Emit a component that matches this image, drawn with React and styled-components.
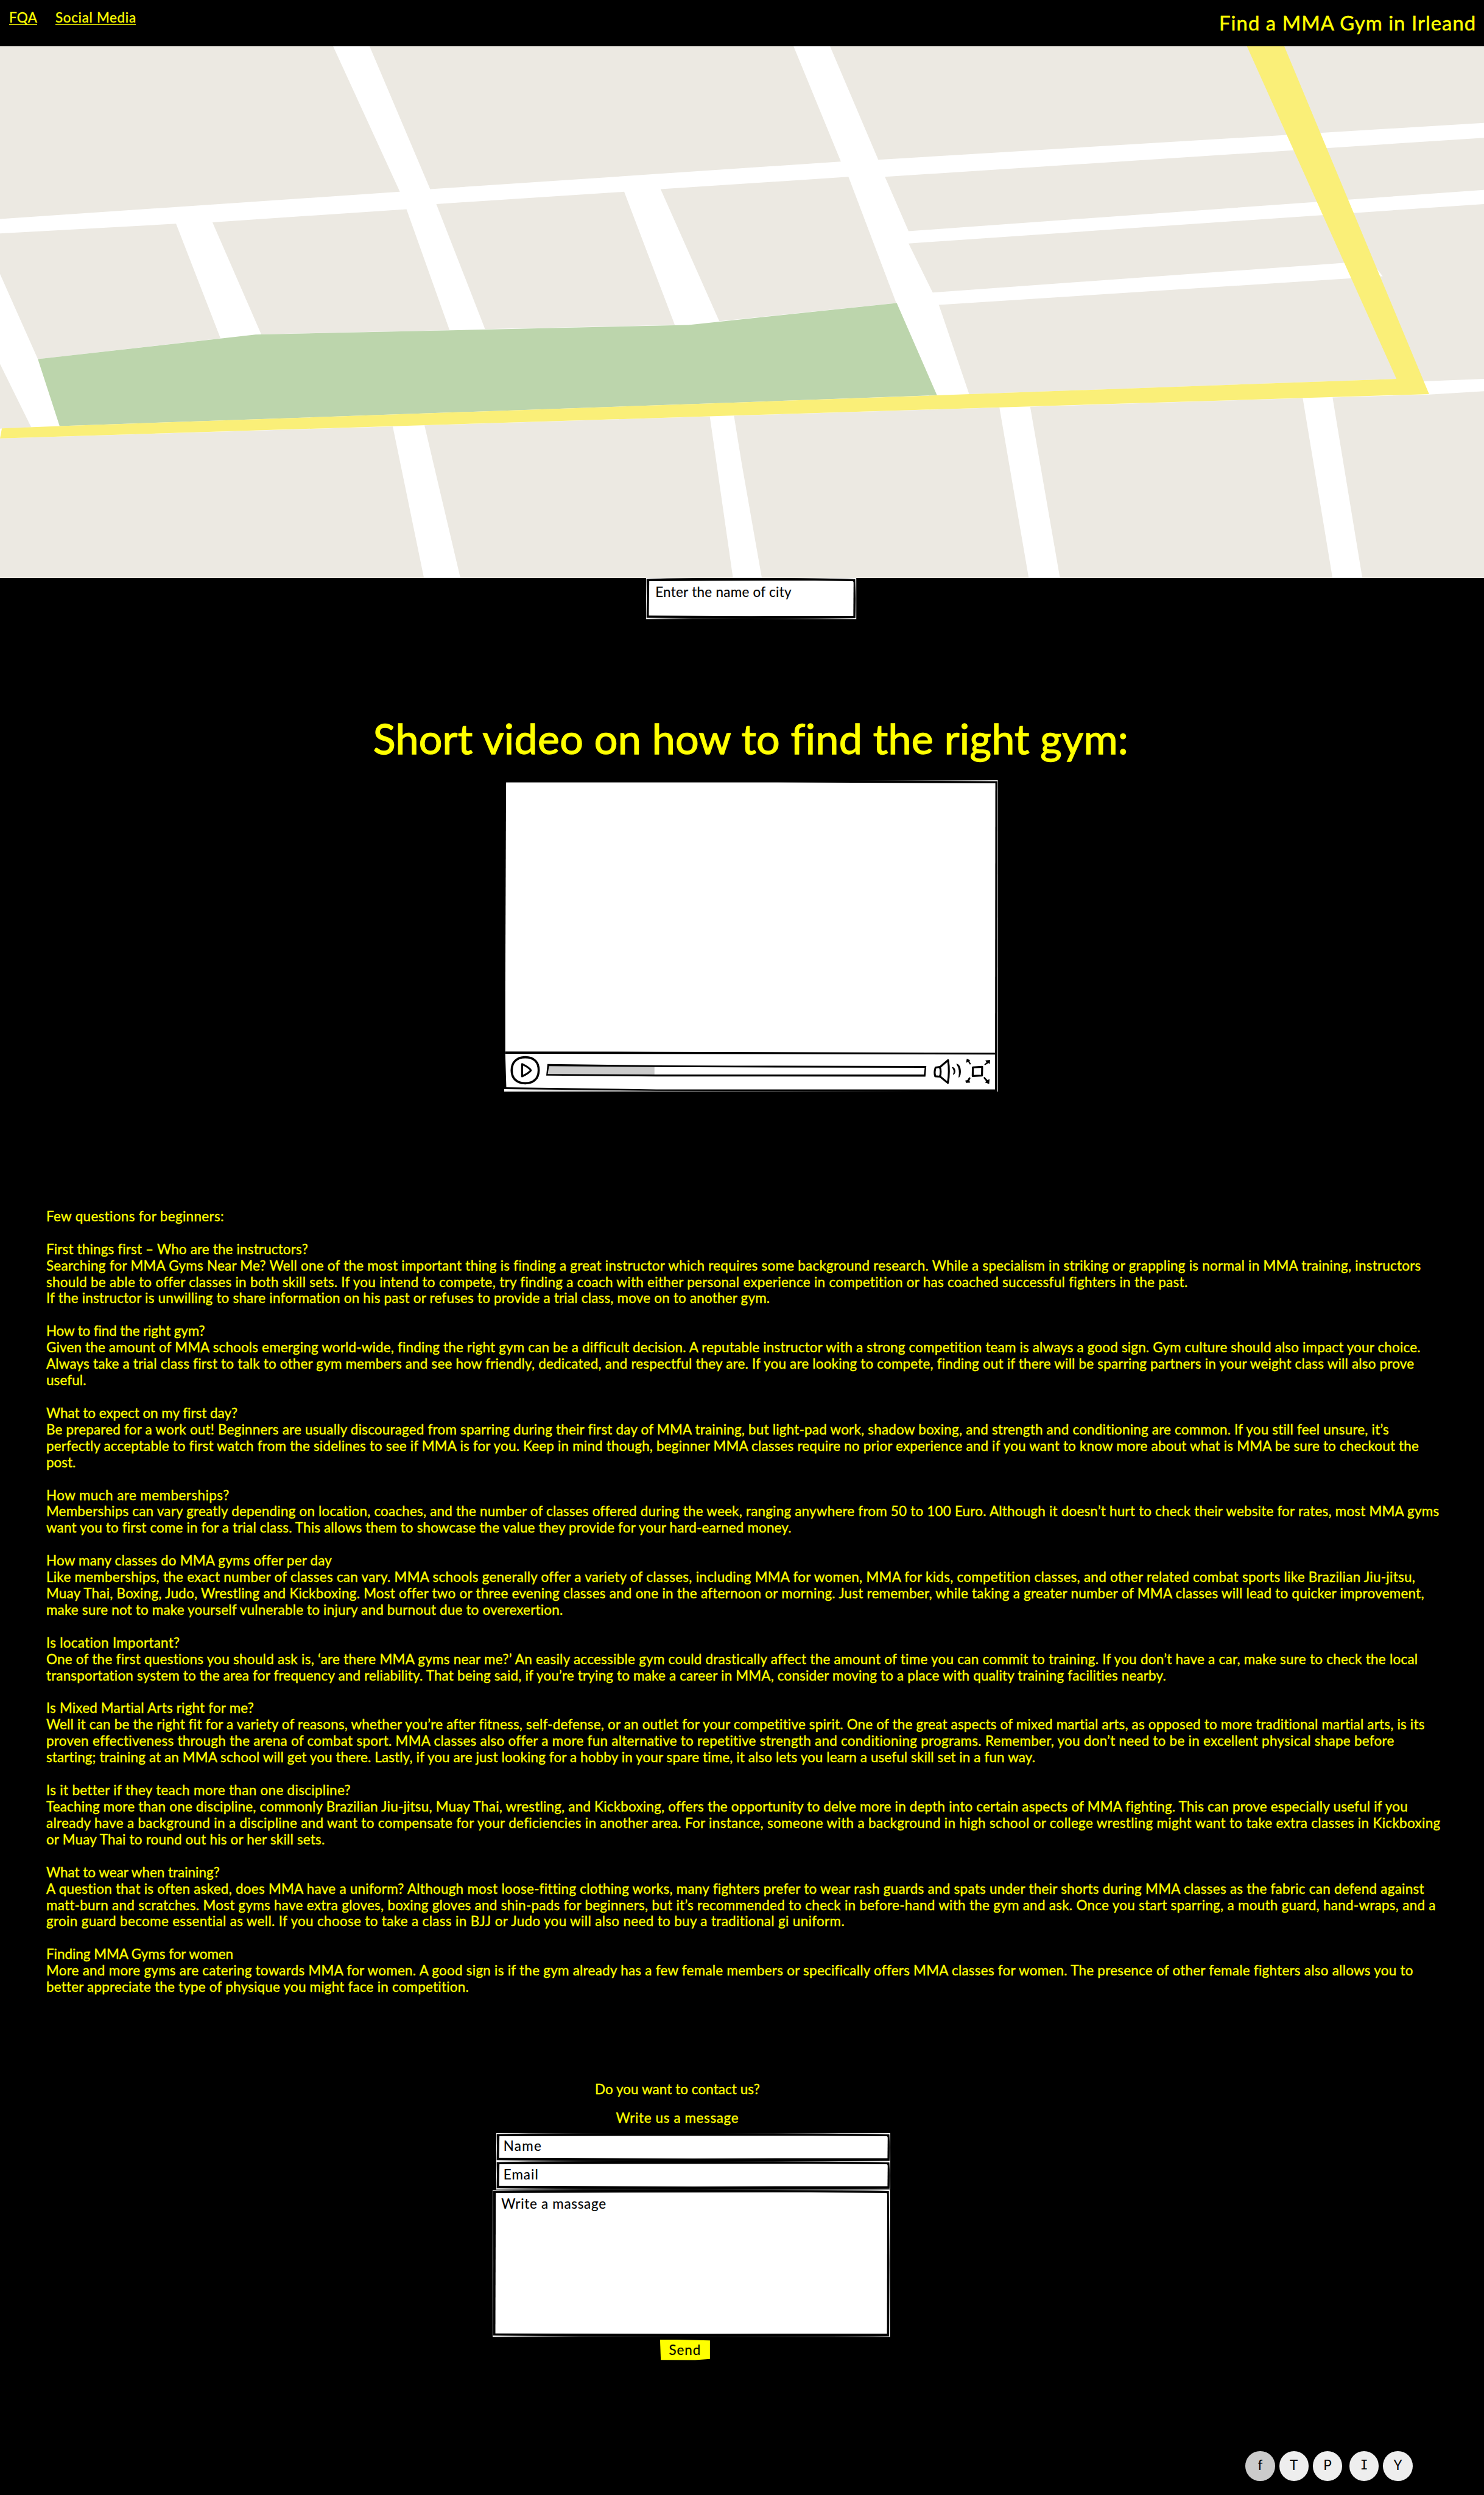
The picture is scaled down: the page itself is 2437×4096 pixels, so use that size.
import React, { useLayoutEffect, useRef } from "react";
import styled, { createGlobalStyle } from "styled-components";

/* Every size below is written in design units and scaled to the page. */
const SCALE = 0.863;
const u = (n) => `${+(n * SCALE).toFixed(3)}px`;

const YELLOW = "#ffff00";
const SANS = `Lato, "Open Sans", "Liberation Sans", sans-serif`;

const GlobalStyle = createGlobalStyle`
  *, *::before, *::after { box-sizing: border-box; }
  html, body { margin: 0; padding: 0; background: #000; }
  body { overflow: hidden; }
`;

const Page = styled.div`
  display: flex;
  flex-direction: column;
  align-items: flex-start;
  width: 2437px;
  height: 4096px;
  overflow: hidden;
  background: #000;
  color: ${YELLOW};
  font-family: ${SANS};
  font-size: ${u(26)};
  line-height: ${u(31.2)};
`;

const Fitted = styled.span`
  display: block;
  width: ${(p) => u(p.$width)};
  white-space: pre;
  -webkit-text-stroke: ${(p) => u(p.$stroke)} currentColor;
`;

/* A single line whose tracking is adjusted until it spans the given measure. */
function FitText({ width, stroke = 0.4, children, ...rest }) {
  const ref = useRef(null);
  useLayoutEffect(() => {
    const el = ref.current;
    el.style.letterSpacing = "0.001px";
    const range = document.createRange();
    range.selectNodeContents(el);
    const natural = range.getBoundingClientRect().width;
    const gaps = Math.max(1, el.textContent.length - 1);
    el.style.letterSpacing = `${(width * SCALE - natural) / gaps}px`;
  }, [width, children]);
  return (
    <Fitted ref={ref} $width={width} $stroke={stroke} {...rest}>
      {children}
    </Fitted>
  );
}

/* ---------- header ---------- */

const Header = styled.header`
  display: flex;
  justify-content: space-between;
  align-items: flex-start;
  width: 100%;
  height: ${u(88)};
  padding: ${u(18)} ${u(16)} 0 ${u(17.5)};
`;

const Nav = styled.nav`
  display: flex;
  gap: ${u(35)};
`;

const NavLink = styled.a`
  color: inherit;
  height: ${u(30)};
  border-bottom: ${u(2)} solid ${YELLOW};
`;

const Title = styled.h1`
  margin: ${u(1.5)} 0 0;
  font-size: ${u(38)};
  font-weight: 400;
  line-height: ${u(48)};
`;

/* ---------- map ---------- */

const MapView = styled.svg`
  display: block;
  width: 100%;
  height: ${u(1012)};
  background: #fff;
`;

const BLOCKS = [
  "0,124 704,124 845,515 0,588",
  "781,124 1677,124 1777,434 909,508",
  "1754,124 3136,124 3136,330 1856,429",
  "0,627 372,601 466,909 80,965 0,736",
  "0,978 66,1148 0,1152",
  "449,597 859,562 950,887 552,898",
  "922,548 1319,515 1426,873 1025,884",
  "1396,508 1793,475 1894,814 1520,863",
  "1870,475 3136,370 3136,510 1920,621",
  "1920,654 3136,548 3136,1018 3000,1025 2951,1018 2048,1059 1984,819 1971,786",
  "0,1178 830,1146 896,1554 0,1554",
  "897,1143 1500,1119 1549,1554 973,1554",
  "1551,1117 2112,1095 2174,1554 1610,1554 1568,1250",
  "2177,1093 2753,1070 2816,1554 2240,1554",
  "2816,1068 3020,1060 3136,1051 3136,1554 2879,1554",
];

function StreetMap() {
  return (
    <MapView viewBox="0 124 3136 1430" preserveAspectRatio="none">
      <g fill="#ece9e2">
        {BLOCKS.map((points) => (
          <polygon key={points} points={points} />
        ))}
      </g>
      <polygon
        fill="#fff"
        points="1960,787 1971,786 2841,706 2905,715 2922,742 2853,748 1984,819 1960,820"
      />
      <polygon
        fill="#bcd5ac"
        points="80,965 540,899 1455,873 1895,814 1980,1062 1568,1081 126,1145"
      />
      <polygon
        fill="#faef78"
        points="4,1151 126,1145 1568,1081 2951,1018 2635,124 2714,124 3020,1059 1568,1116 0,1178"
      />
    </MapView>
  );
}

/* ---------- hand drawn boxes ---------- */

const Box = styled.div`
  position: relative;
  width: ${(p) => u(p.$w)};
  height: ${(p) => u(p.$h)};
  margin-left: ${(p) => u(p.$left || 0)};
  padding: ${(p) => u(p.$padTop)} 0 0 ${(p) => u(p.$padLeft)};
  color: #000;
`;

const Backdrop = styled.svg`
  position: absolute;
  inset: 0;
  width: 100%;
  height: 100%;
`;

const Layer = styled.div`
  position: relative;
`;

function SketchBox({ id, w, h, left, padTop, padLeft, children }) {
  const outer = `M0.8,1.6 Q${w * 0.3},-0.4 ${w * 0.55},0 Q${w * 0.85},0.4 ${w - 2},2.2 L${w - 1},${h * 0.5} L${w - 1.6},${h - 1.4} Q${w * 0.7},${h - 0.2} ${w * 0.5},${h - 0.9} Q${w * 0.25},${h - 1.4} 0.8,${h - 2.8} L1.2,${h * 0.5} Z`;
  const inner = `M6,5.8 Q${w * 0.4},5 ${w * 0.8},5 L${w - 7},5.8 Q${w - 5.3},6 ${w - 5.2},8.6 L${w - 5.6},${h - 6.2} L${w * 0.5},${h - 6} L5.2,${h - 6.8} Z`;
  return (
    <Box $w={w} $h={h} $left={left} $padTop={padTop} $padLeft={padLeft}>
      <Backdrop viewBox={`0 0 ${w} ${h}`} preserveAspectRatio="none">
        <defs>
          <linearGradient id={id} x1="0" x2="1" y1="0" y2="0">
            <stop offset="0" stopColor="#fff" />
            <stop offset="0.22" stopColor="#333" />
            <stop offset="0.5" stopColor="#111" />
            <stop offset="0.72" stopColor="#777" />
            <stop offset="1" stopColor="#fff" />
          </linearGradient>
        </defs>
        <rect width={w} height={h} fill={`url(#${id})`} />
        <path d={outer} fill="#000" />
        <path d={inner} fill="#fff" />
      </Backdrop>
      <Layer>{children}</Layer>
    </Box>
  );
}

/* ---------- video ---------- */

const VideoHeading = styled.h2`
  margin: ${u(179.5)} 0 0 ${u(710)};
  font-size: ${u(79)};
  font-weight: 400;
  line-height: ${u(94)};
`;

const Player = styled.section`
  position: relative;
  display: flex;
  flex-direction: column;
  width: ${u(939)};
  height: ${u(592)};
  margin: ${u(32.5)} 0 0 ${u(960)};
`;

const Screen = styled.div`
  height: ${u(520)};
`;

const Controls = styled.div`
  position: relative;
  display: flex;
  align-items: center;
  height: ${u(64)};
  padding-left: ${u(10)};
`;

const Glyph = styled.svg`
  display: block;
  flex: none;
  width: ${(p) => u(p.$w)};
  height: ${(p) => u(p.$h)};
  margin-left: ${(p) => u(p.$gap || 0)};
  overflow: visible;
`;

function VideoPlayer() {
  return (
    <Player>
      <Backdrop viewBox="0 0 939 592" preserveAspectRatio="none">
        <defs>
          <linearGradient id="fadeOut" x1="0" x2="1" y1="0" y2="0">
            <stop offset="0" stopColor="#fff" />
            <stop offset="0.4" stopColor="#999" />
            <stop offset="1" stopColor="#000" />
          </linearGradient>
          <linearGradient id="fadeIn" x1="0" x2="1" y1="0" y2="0">
            <stop offset="0" stopColor="#000" />
            <stop offset="0.5" stopColor="#888" />
            <stop offset="1" stopColor="#fff" />
          </linearGradient>
        </defs>
        <polygon fill="#fff" points="3.6,4 520,4.2 934.6,5.6 934,588 290,588 4,584 2,520 2,400" />
        <polygon fill="url(#fadeOut)" points="0,587.6 290,590.6 780,591.2 780,592 0,592" />
        <polygon fill="url(#fadeIn)" points="640,0.5 939,0 939,1.6" />
        <polygon fill="#fff" points="938,0 939,0 939,592 937.5,592" />
        <polygon points="2,516 290,516.4 935,518.2 935,521.8 520,520.8 2,520.2" />
      </Backdrop>
      <Screen />
      <Controls>
        <Glyph $w={58} $h={56} viewBox="970 2008 58 56" fill="none" stroke="#000">
          <path
            strokeWidth="4.2"
            d="M999.5,2011 C1017,2011 1025.3,2021 1025.2,2036 C1025,2051 1016,2060.5 1000,2060.6 C983,2060.7 973.8,2051 973.8,2036 C973.8,2021 983,2011 999.5,2011 Z"
          />
          <path
            strokeWidth="3.6"
            strokeLinejoin="round"
            d="M993.6,2024 C1001,2027.5 1008,2031.5 1010.4,2036 C1007.5,2040.5 1001,2044 993.6,2047.4 Z"
          />
        </Glyph>
        <Glyph $w={724} $h={26} $gap={12} viewBox="1040 2023 724 26">
          <polygon fill="#fff" points="1044,2025 1762,2029 1760,2047 1042,2044" />
          <polygon fill="#cbcbcb" points="1044,2026 1246,2028 1246,2045 1042,2044" />
          <path
            fillRule="evenodd"
            d="M1042.3,2024 L1250,2026.5 L1400,2027 L1763.3,2027.6 L1761.6,2047.8 L1400,2047.6 L1250,2047.6 L1040,2046 Z M1045.4,2027.8 L1042.8,2043 L1250,2043.8 L1758.6,2044 L1760.2,2031 L1400,2030.3 L1250,2029.8 Z"
          />
        </Glyph>
        <Glyph $w={52} $h={56} $gap={12} viewBox="30 6 156 168" fill="none" stroke="#000" strokeLinecap="round" strokeLinejoin="round">
          <path strokeWidth="11" d="M66,72 L113,32 C119,70 119,120 112,162 L68,126" />
          <path strokeWidth="11" d="M42,74 L66,71 C72,85 73,112 66,126 L40,124 C34,106 36,90 42,74 Z" />
          <path fill="#000" strokeWidth="4" d="M137,73 C156,76 157,106 143,113 C150,98 149,86 137,73 Z" />
          <path fill="#000" strokeWidth="4" d="M163,54 C188,62 189,112 175,129 C179,106 178,76 163,54 Z" />
        </Glyph>
        <Glyph $w={48} $h={56} $gap={8.7} viewBox="212 6 144 168">
          <path fill="none" stroke="#000" strokeWidth="11" strokeLinejoin="round" d="M256,73 L309,70 L308,120 L255,122 Z" />
          <path d="M221,24 L240,31 L236,37 L245,54 L239,57 L229,42 L217,47 Z" />
          <path d="M354,30 L353,54 L345,49 L325,61 L321,56 L334,44 L327,34 Z" />
          <path d="M243,134 L236,149 L241,160 L216,162 L213,148 L224,146 L235,129 Z" />
          <path d="M322,127 L339,145 L351,141 L349,168 L326,160 L331,152 L316,133 Z" />
        </Glyph>
      </Controls>
    </Player>
  );
}

/* ---------- questions ---------- */

const Faq = styled.section`
  display: flex;
  flex-direction: column;
  gap: ${u(31.2)};
  margin: ${u(222.8)} 0 0 ${u(88)};
`;

const Question = styled.article`
  display: flex;
  flex-direction: column;
`;

const FAQ = [
  [["Few questions for beginners:", 426]],
  [
    ["First things first – Who are the instructors?", 586],
    ["Searching for MMA Gyms Near Me? Well one of the most important thing is finding a great instructor which requires some background research. While a specialism in striking or grappling is normal in MMA training, instructors", 2704],
    ["should be able to offer classes in both skill sets. If you intend to compete, try finding a coach with either personal experience in competition or has coached successful fighters in the past.", 2260],
    ["If the instructor is unwilling to share information on his past or refuses to provide a trial class, move on to another gym.", 1465],
  ],
  [
    ["How to find the right gym?", 390],
    ["Given the amount of MMA schools emerging world-wide, finding the right gym can be a difficult decision. A reputable instructor with a strong competition team is always a good sign. Gym culture should also impact your choice.", 2703],
    ["Always take a trial class first to talk to other gym members and see how friendly, dedicated, and respectful they are. If you are looking to compete, finding out if there will be sparring partners in your weight class will also prove", 2691],
    ["useful.", 164],
  ],
  [
    ["What to expect on my first day?", 452],
    ["Be prepared for a work out! Beginners are usually discouraged from sparring during their first day of MMA training, but light-pad work, shadow boxing, and strength and conditioning are common. If you still feel unsure, it’s", 2643],
    ["perfectly acceptable to first watch from the sidelines to see if MMA is for you. Keep in mind though, beginner MMA classes require no prior experience and if you want to know more about what is MMA be sure to checkout the", 2700],
    ["post.", 144],
  ],
  [
    ["How much are memberships?", 436],
    ["Memberships can vary greatly depending on location, coaches, and the number of classes offered during the week, ranging anywhere from 50 to 100 Euro. Although it doesn’t hurt to check their website for rates, most MMA gyms", 2738.5],
    ["want you to first come in for a trial class. This allows them to showcase the value they provide for your hard-earned money.", 1506],
  ],
  [
    ["How many classes do MMA gyms offer per day", 631.5],
    ["Like memberships, the exact number of classes can vary. MMA schools generally offer a variety of classes, including MMA for women, MMA for kids, competition classes, and other related combat sports like Brazilian Jiu-jitsu,", 2693],
    ["Muay Thai, Boxing, Judo, Wrestling and Kickboxing. Most offer two or three evening classes and one in the afternoon or morning. Just remember, while taking a greater number of MMA classes will lead to quicker improvement,", 2710],
    ["make sure not to make yourself vulnerable to injury and burnout due to overexertion.", 1071],
  ],
  [
    ["Is location Important?", 342],
    ["One of the first questions you should ask is, ‘are there MMA gyms near me?’ An easily accessible gym could drastically affect the amount of time you can commit to training. If you don’t have a car, make sure to check the local", 2698],
    ["transportation system to the area for frequency and reliability. That being said, if you’re trying to make a career in MMA, consider moving to a place with quality training facilities nearby.", 2219],
  ],
  [
    ["Is Mixed Martial Arts right for me?", 483],
    ["Well it can be the right fit for a variety of reasons, whether you’re after fitness, self-defense, or an outlet for your competitive spirit. One of the great aspects of mixed martial arts, as opposed to more traditional martial arts, is its", 2711],
    ["proven effectiveness through the arena of combat sport. MMA classes also offer a more fun alternative to repetitive strength and conditioning programs. Remember, you don’t need to be in excellent physical shape before", 2653],
    ["starting; training at an MMA school will get you there. Lastly, if you are just looking for a hobby in your spare time, it also lets you learn a useful skill set in a fun way.", 1970],
  ],
  [
    ["Is it better if they teach more than one discipline?", 667],
    ["Teaching more than one discipline, commonly Brazilian Jiu-jitsu, Muay Thai, wrestling, and Kickboxing, offers the opportunity to delve more in depth into certain aspects of MMA fighting. This can prove especially useful if you", 2679],
    ["already have a background in a discipline and want to compensate for your deficiencies in another area. For instance, someone with a background in high school or college wrestling might want to take extra classes in Kickboxing", 2741],
    ["or Muay Thai to round out his or her skill sets.", 618],
  ],
  [
    ["What to wear when training?", 418],
    ["A question that is often asked, does MMA have a uniform? Although most loose-fitting clothing works, many fighters prefer to wear rash guards and spats under their shorts during MMA classes as the fabric can defend against", 2710],
    ["matt-burn and scratches. Most gyms have extra gloves, boxing gloves and shin-pads for beginners, but it’s recommended to check in before-hand with the gym and ask. Once you start sparring, a mouth guard, hand-wraps, and a", 2732],
    ["groin guard become essential as well. If you choose to take a class in BJJ or Judo you will also need to buy a traditional gi uniform.", 1607],
  ],
  [
    ["Finding MMA Gyms for women", 444],
    ["More and more gyms are catering towards MMA for women. A good sign is if the gym already has a few female members or specifically offers MMA classes for women. The presence of other female fighters also allows you to", 2689],
    ["better appreciate the type of physique you might face in competition.", 892],
  ],
];

/* ---------- contact ---------- */

const Contact = styled.section`
  display: flex;
  flex-direction: column;
  align-items: flex-start;
  margin: ${u(163.8)} 0 0 ${u(938)};
`;

const Prompt = styled.div`
  margin: 0 0 ${(p) => u(p.$below)} ${(p) => u(p.$left)};
`;

const SendButton = styled.button`
  display: flex;
  width: ${u(95)};
  height: ${u(39)};
  margin: ${u(5)} 0 0 ${u(318)};
  padding: ${u(4.4)} 0 0 ${u(17)};
  border: 0;
  background: ${YELLOW};
  clip-path: polygon(0 0, 20% 0, 100% 4%, 100% 95%, 70% 100%, 1.5% 99%);
  color: #000;
  font: inherit;
  text-align: left;
`;

/* ---------- social ---------- */

const Social = styled.footer`
  display: flex;
  gap: ${u(8)};
  margin: ${u(173.8)} 0 0 ${u(2370)};
`;

const Badge = styled.a`
  display: flex;
  align-items: center;
  justify-content: center;
  width: ${u(56)};
  height: ${u(56)};
  margin-left: ${(p) => u(p.$gap || 0)};
  padding-bottom: ${u(3)};
  border-radius: 50%;
  background: ${(p) => (p.$active ? "#cbcbcb" : "#eeeeee")};
  color: #000;
  font-family: ${(p) => (p.$slab ? `"DejaVu Sans Mono", monospace` : SANS)};
  font-size: ${(p) => u(p.$slab ? 25 : 26)};
`;

export default function App() {
  return (
    <>
      <GlobalStyle />
      <Page>
        <Header>
          <Nav>
            <NavLink><FitText width={53}>FQA</FitText></NavLink>
            <NavLink><FitText width={153}>Social Media</FitText></NavLink>
          </Nav>
          <Title><FitText width={488} stroke={0.6}>Find a MMA Gym in Irleand</FitText></Title>
        </Header>

        <StreetMap />

        <SketchBox id="edgeCity" w={400} h={78} left={1230} padTop={11.6} padLeft={17}>
          <FitText width={259} stroke={0.2}>Enter the name of city</FitText>
        </SketchBox>

        <VideoHeading>
          <FitText width={1437} stroke={1.6}>Short video on how to find the right gym:</FitText>
        </VideoHeading>
        <VideoPlayer />

        <Faq>
          {FAQ.map((lines) => (
            <Question key={lines[0][0]}>
              {lines.map(([text, right]) => (
                <FitText key={text} width={right - 88}>{text}</FitText>
              ))}
            </Question>
          ))}
        </Faq>

        <Contact>
          <Prompt $left={194} $below={22.3}>
            <FitText width={314}>Do you want to contact us?</FitText>
          </Prompt>
          <Prompt $left={234} $below={13}>
            <FitText width={233}>Write us a message</FitText>
          </Prompt>
          <SketchBox id="edgeName" w={750} h={54} left={6} padTop={10.1} padLeft={14}>
            <FitText width={72} stroke={0.2}>Name</FitText>
          </SketchBox>
          <SketchBox id="edgeEmail" w={750} h={54} left={6} padTop={10.3} padLeft={14}>
            <FitText width={66} stroke={0.2}>Email</FitText>
          </SketchBox>
          <SketchBox id="edgeMessage" w={756} h={280} padTop={12.2} padLeft={16}>
            <FitText width={199} stroke={0.2}>Write a massage</FitText>
          </SketchBox>
          <SendButton><FitText width={60} stroke={0.2}>Send</FitText></SendButton>
        </Contact>

        <Social>
          <Badge $active>f</Badge>
          <Badge>T</Badge>
          <Badge>P</Badge>
          <Badge $slab $gap={6}>I</Badge>
          <Badge>Y</Badge>
        </Social>
      </Page>
    </>
  );
}
